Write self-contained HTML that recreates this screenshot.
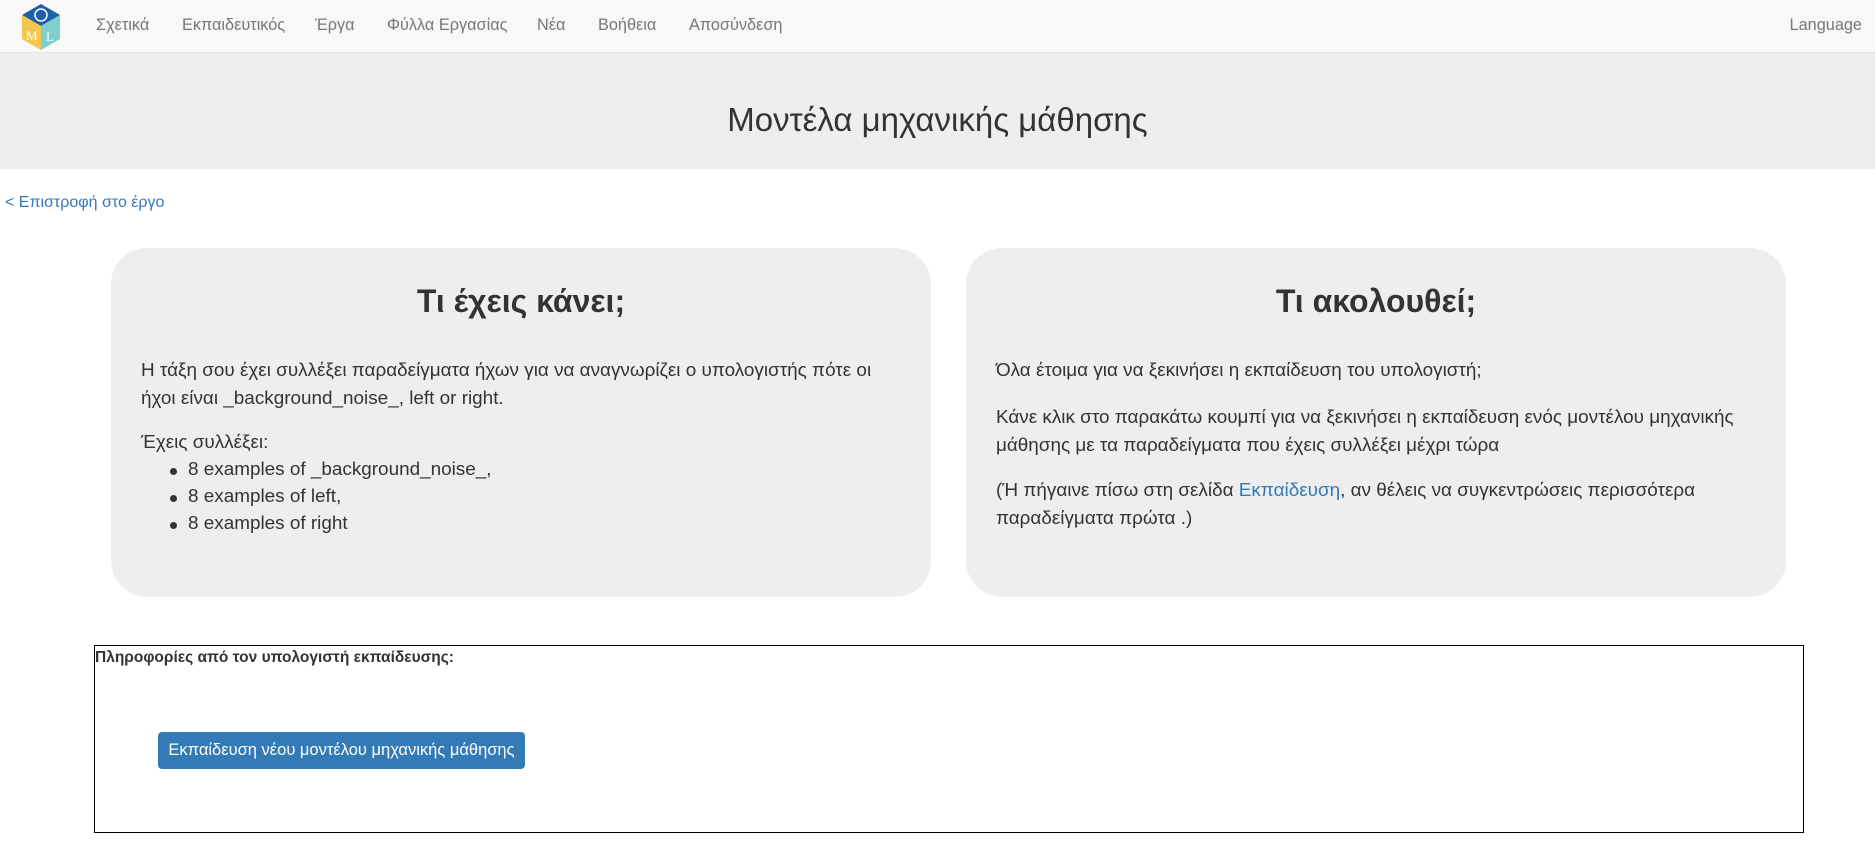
<!DOCTYPE html>
<html><head><meta charset="utf-8"><style>
*{box-sizing:border-box}
body{margin:0;width:1875px;height:865px;overflow:hidden;font-family:"Liberation Sans","DejaVu Sans",sans-serif;color:#333;background:#fff}
.nav{position:absolute;left:0;top:0;width:1875px;height:53px;background:#f8f8f8;border-bottom:1px solid #e7e7e7}
.nav a{position:absolute;top:16px;font-size:16.3px;color:#777;text-decoration:none;white-space:nowrap}
.jumbo{position:absolute;left:0;top:53px;width:1875px;height:116px;background:#eee;text-align:center}
.jumbo h1{margin:0;font-weight:normal;font-size:33px;line-height:134px;color:#333}
.back{position:absolute;left:5px;top:194px;font-size:16px;color:#337ab7;text-decoration:none}
.card{position:absolute;top:248px;width:820px;height:349px;background:#eee;border-radius:36px}
.t{position:absolute;font-size:18.9px;line-height:27.5px;white-space:nowrap}
.box{position:absolute;left:94px;top:645px;width:1710px;height:188px;border:1px solid #000}
.btn{position:absolute;left:63px;top:86px;width:367px;height:37px;background:#337ab7;border-radius:4px;color:#fff;font-size:16.5px;line-height:37px;text-align:center}
.dot{position:absolute;width:7px;height:7px;border-radius:50%;background:#333}
h2{position:absolute;top:283px;margin:0;text-align:center;font-size:32px;width:820px}
</style></head><body>
<div class="nav">
<svg style="position:absolute;left:20px;top:4px" width="42" height="46" viewBox="0 0 42 46">
<polygon points="21,0 40,11 21,22 2,11" fill="#1f5fa8"/>
<circle cx="21" cy="11" r="6" fill="none" stroke="#fff" stroke-width="1.5"/>
<polygon points="2,11 21,22 21,46 2,35" fill="#f2c94c"/>
<polygon points="40,11 21,22 21,46 40,35" fill="#7fcfcf"/>
<text x="6" y="36" font-size="13" fill="#fff" font-family="Liberation Serif">M</text>
<text x="26" y="37" font-size="13" fill="#fff" font-family="Liberation Serif">L</text>
</svg>
<a style="left:96px">Σχετικά</a><a style="left:182px">Εκπαιδευτικός</a><a style="left:315px">Έργα</a><a style="left:387px">Φύλλα Εργασίας</a><a style="left:537px">Νέα</a><a style="left:598px">Βοήθεια</a><a style="left:689px">Αποσύνδεση</a>
<a style="right:13px">Language</a>
</div>
<div class="jumbo"><h1>Μοντέλα μηχανικής μάθησης</h1></div>
<a class="back">&lt; Επιστροφή στο έργο</a>
<div class="card" style="left:111px"></div>
<div class="card" style="left:966px"></div>
<h2 style="left:111px">Τι έχεις κάνει;</h2>
<h2 style="left:966px">Τι ακολουθεί;</h2>
<div class="t" style="left:141px;top:357px">Η τάξη σου έχει συλλέξει παραδείγματα ήχων για να αναγνωρίζει ο υπολογιστής πότε οι<br>ήχοι είναι _background_noise_, left or right.</div>
<div class="t" style="left:141px;top:429px">Έχεις συλλέξει:</div>
<div class="dot" style="left:170px;top:468px"></div><div class="t" style="left:188px;top:456px">8 examples of _background_noise_,</div>
<div class="dot" style="left:170px;top:495px"></div><div class="t" style="left:188px;top:483px">8 examples of left,</div>
<div class="dot" style="left:170px;top:522px"></div><div class="t" style="left:188px;top:510px">8 examples of right</div>
<div class="t" style="left:996px;top:357px">Όλα έτοιμα για να ξεκινήσει η εκπαίδευση του υπολογιστή;</div>
<div class="t" style="left:996px;top:404px">Κάνε κλικ στο παρακάτω κουμπί για να ξεκινήσει η εκπαίδευση ενός μοντέλου μηχανικής<br>μάθησης με τα παραδείγματα που έχεις συλλέξει μέχρι τώρα</div>
<div class="t" style="left:996px;top:477px">(Ή πήγαινε πίσω στη σελίδα <span style="color:#337ab7">Εκπαίδευση</span>, αν θέλεις να συγκεντρώσεις περισσότερα<br>παραδείγματα πρώτα .)</div>
<div class="box">
<div style="position:absolute;left:0;top:3px;font-size:15.5px;font-weight:bold">Πληροφορίες από τον υπολογιστή εκπαίδευσης:</div>
<div class="btn">Εκπαίδευση νέου μοντέλου μηχανικής μάθησης</div>
</div>
</body></html>
